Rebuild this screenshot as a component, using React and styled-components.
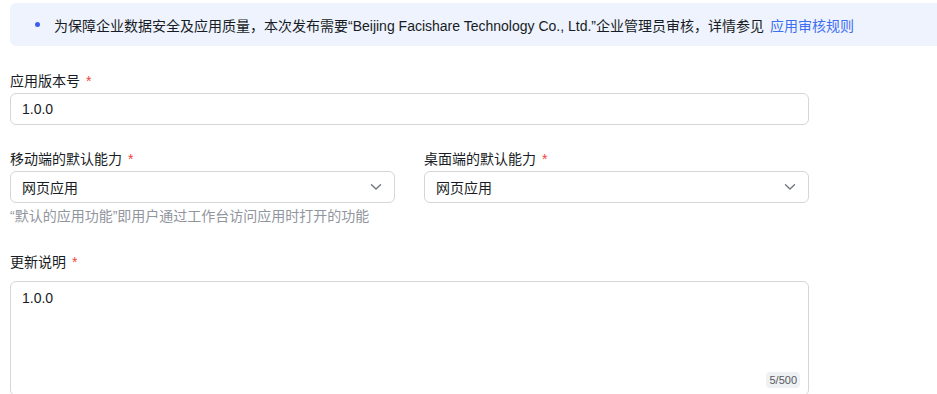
import React from "react";
import styled, { createGlobalStyle } from "styled-components";

const Global = createGlobalStyle`
  html, body { margin: 0; padding: 0; background: #fff; }
  body {
    font-family: "Liberation Sans", "Noto Sans CJK SC", sans-serif;
    color: #181c25;
    font-size: 14px;
  }
  * { box-sizing: border-box; }
`;

const Page = styled.div`
  padding: 3px 0 0 10px;
  width: 937px;
  height: 394px;
  overflow: hidden;
`;

const Banner = styled.div`
  height: 43px;
  background: #eef3fe;
  border-radius: 6px 0 0 6px;
  display: flex;
  align-items: center;
  padding-left: 25px;
  font-size: 14px;
  color: #181c25;
`;

const Dot = styled.span`
  width: 5px;
  height: 5px;
  border-radius: 50%;
  background: #3c5ef0;
  margin-right: 14px;
  flex: none;
`;

const Link = styled.a`
  color: #3e6ff0;
  text-decoration: none;
  margin-left: 6px;
`;

const Form = styled.div`
  width: 799px;
  display: flex;
  flex-direction: column;
`;

const Field = styled.div`
  display: flex;
  flex-direction: column;
  margin-top: ${(p) => p.$top}px;
`;

const Label = styled.div`
  height: 22px;
  line-height: 22px;
  font-size: 14px;
  margin-bottom: ${(p) => p.$gap ?? 1}px;
  color: #181c25;
`;

const Star = styled.span`
  color: #f0443a;
  margin-left: 6px;
`;

const Box = styled.div`
  height: 32px;
  border: 1px solid #d4d6da;
  border-radius: 6px;
  display: flex;
  align-items: center;
  justify-content: space-between;
  padding: 0 12px 0 11px;
  font-size: 14px;
  color: #181c25;
  background: #fff;
`;

const Row = styled.div`
  display: grid;
  grid-template-columns: 385px 385px;
  column-gap: 29px;
  margin-top: 23px;
`;

const Hint = styled.div`
  font-size: 14px;
  line-height: 20px;
  color: #91959e;
  margin-top: 3px;
`;

const TextArea = styled.div`
  position: relative;
  height: 115px;
  border: 1px solid #d4d6da;
  border-radius: 6px;
  padding: 5px 11px;
  line-height: 22px;
  font-size: 14px;
`;

const Counter = styled.span`
  position: absolute;
  right: 8px;
  bottom: 7px;
  background: #f0f1f3;
  color: #545861;
  font-size: 11px;
  line-height: 16px;
  padding: 0 3px;
  border-radius: 4px;
`;

const Chevron = () => (
  <svg width="12" height="8" viewBox="0 0 12 8" fill="none">
    <path d="M1.5 1.8 L6 6 L10.5 1.8" stroke="#737780" strokeWidth="1.4" strokeLinecap="round" strokeLinejoin="round" />
  </svg>
);

const Select = ({ value }) => (
  <Box>
    <span>{value}</span>
    <Chevron />
  </Box>
);

export default function App() {
  return (
    <Page>
      <Global />
      <Banner>
        <Dot />
        <span>
          为保障企业数据安全及应用质量，本次发布需要“Beijing Facishare Technology Co., Ltd.”企业管理员审核，详情参见
        </span>
        <Link href="#">应用审核规则</Link>
      </Banner>
      <Form>
        <Field $top={24}>
          <Label>
            应用版本号<Star>*</Star>
          </Label>
          <Box>1.0.0</Box>
        </Field>
        <Row>
          <Field $top={0}>
            <Label>
              移动端的默认能力<Star>*</Star>
            </Label>
            <Select value="网页应用" />
          </Field>
          <Field $top={0}>
            <Label>
              桌面端的默认能力<Star>*</Star>
            </Label>
            <Select value="网页应用" />
          </Field>
        </Row>
        <Hint>“默认的应用功能”即用户通过工作台访问应用时打开的功能</Hint>
        <Field $top={25}>
          <Label $gap={8}>
            更新说明<Star>*</Star>
          </Label>
          <TextArea>
            1.0.0
            <Counter>5/500</Counter>
          </TextArea>
        </Field>
      </Form>
    </Page>
  );
}
